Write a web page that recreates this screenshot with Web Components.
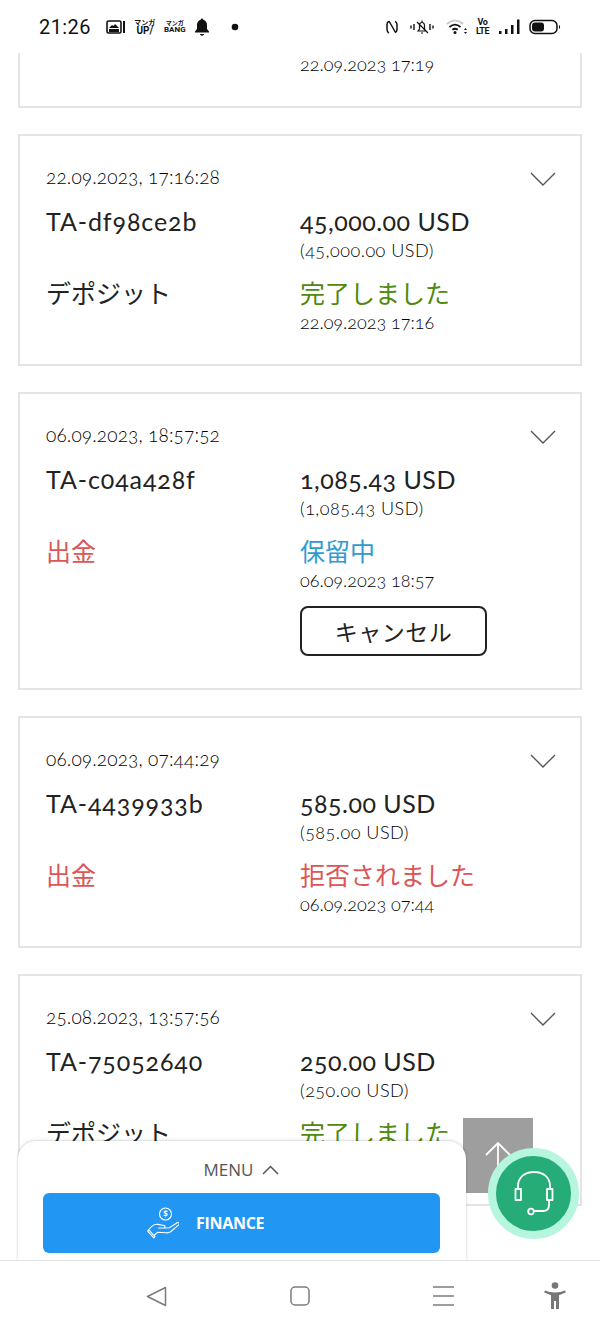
<!DOCTYPE html>
<html lang="ja">
<head>
<meta charset="utf-8">
<title>Transactions</title>
<style>
  html, body { margin: 0; padding: 0; background: #fff; }
  body { font-family: "Lato", "Noto Sans CJK JP", sans-serif; color: #222; font-variant-numeric: oldstyle-nums; }
  span { display: block; }
  .green { color: #4f8a10; }
  .blue { color: #2f9bd0; }
  .red { color: #dc5656; }
</style>
</head>
<body>
<template id="tx-card-tpl">
  <style>
    :host { display: block; margin: 0 18px 26px; border: 2px solid #e4e4e4; padding: 28px 28px 27px 26px; background: #fff; }
    .head { display: flex; justify-content: space-between; align-items: center; height: 24px; font-size: 19px; font-weight: 300; color: #000; letter-spacing: .15px; }
    svg { width: 26px; height: 14px; margin: 6px -4px 0 0; fill: none; stroke: #555; stroke-width: 1.4; }
    .grid { display: grid; grid-template-columns: 254px 1fr; margin-top: 18px; }
    .id { font-size: 25px; line-height: 30px; letter-spacing: .9px; color: #222; }
    .amount { font-size: 25px; line-height: 30px; letter-spacing: .5px; color: #222; }
    .sub { font-size: 18px; font-weight: 300; line-height: 28px; letter-spacing: .5px; color: #000; }
    .type, .status { font-size: 25px; line-height: 30px; margin-top: 14px; }
    .type { color: #222; }
    .when { font-size: 18px; font-weight: 300; line-height: 29px; color: #000; }
  </style>
  <div class="head"><slot name="date"></slot>
    <svg viewBox="0 0 26 14"><path d="M1 1l12 12L25 1"/></svg></div>
  <div class="grid">
    <div class="id"><slot name="id"></slot></div>
    <div><div class="amount"><slot name="amount"></slot></div><div class="sub"><slot name="sub"></slot></div></div>
    <div class="type"><slot name="type"></slot></div>
    <div><div class="status"><slot name="status"></slot></div><div class="when"><slot name="when"></slot></div><slot name="action"></slot></div>
  </div>
</template>

<template id="status-bar-tpl">
  <style>
    :host { display: flex; align-items: center; height: 53px; flex: none; padding: 0 38px 0 39px; box-sizing: border-box; background: #fff; color: #111; position: relative; z-index: 2; font-variant-numeric: normal; }
    .time { font: 20px "Roboto", sans-serif; letter-spacing: .4px; margin-right: 15px; }
    .left, .right { display: flex; align-items: center; }
    .right { margin-left: auto; }
    svg { display: block; flex: none; }
    .manga { font: 700 7px/8px "Noto Sans CJK JP", sans-serif; text-align: center; width: 22px; white-space: nowrap; }
    .manga b { display: block; font: 700 10px/9px "Roboto", sans-serif; }
    .small { font-size: 6px; line-height: 7px; }
    .small b { font-size: 8px; line-height: 8px; }
    .volte { font: 700 9px/9px "Roboto", sans-serif; text-align: center; width: 13px; letter-spacing: -.5px; }
  </style>
  <div class="left">
    <span class="time">21:26</span>
    <svg width="20" height="14" viewBox="0 0 20 14" style="margin-right:8px"><rect x="1" y="1" width="14" height="12" rx="1.5" fill="none" stroke="#111" stroke-width="1.6"/><path d="M3 8l3-3 1.500 1L9 4l4 4zM3 9h10v3H3z" fill="#111"/><path d="M17 1h2v12h-2z" fill="#111"/></svg>
    <div class="manga" style="margin-right:8px">マンガ<b>UP/</b></div>
    <div class="manga small" style="margin-right:9px">マンガ<b>BANG</b></div>
    <svg width="16" height="18" viewBox="0 0 16 18" style="margin-left:-1px"><path d="M8 0.500c.8 0 1.300.6 1.300 1.300 2.500.6 3.700 2.700 3.700 5.200v4l2 2.500v1H1v-1l2-2.500V7c0-2.500 1.200-4.600 3.700-5.200C6.700 1.100 7.200.5 8 .5zM6 16h4c0 1-.9 1.700-2 1.700S6 17 6 16z" fill="#111"/></svg>
    <svg width="8" height="8" viewBox="0 0 8 8" style="margin-left:21px"><circle cx="4" cy="4" r="3.300" fill="#111"/></svg>
  </div>
  <div class="right">
    <svg width="12" height="16" viewBox="0 0 12 16" style="margin-right:12px"><path d="M3 2.500C1.500 3 1 4 1 5.500v5c0 1.500.7 3 2 3.500M3 2l6.500 11.500M9 2.500c1.300.5 2 1.800 2 3v5c0 1.500-.5 2.500-2 3" fill="none" stroke="#111" stroke-width="1.500"/></svg>
    <svg width="24" height="16" viewBox="0 0 24 16" style="margin-right:12px"><path d="M8 12h8l-1.500-2V7c0-2-1-3.500-2.500-3.500S9.500 5 9.500 7v3zM7 3l11 11M11 14h2M12 1.500v2" fill="none" stroke="#111" stroke-width="1.200"/><path d="M1 6.500v3M4 5v6M20 5v6M23 6.500v3" stroke="#111" stroke-width="1.400"/></svg>
    <svg width="22" height="16" viewBox="0 0 22 16" style="margin-right:8px"><path d="M1 5c5-4.500 11-4.500 16 0" fill="none" stroke="#c8c8c8" stroke-width="1.800"/><path d="M3.500 8c3.500-3 7.500-3 11 0M6.300 10.800c2-1.600 3.400-1.600 5.400 0" fill="none" stroke="#111" stroke-width="1.800"/><circle cx="9" cy="13.500" r="1.500" fill="#111"/><path d="M19.500 9l-1.500 2h3zM19.500 15l-1.500-2h3z" fill="#111"/></svg>
    <div class="volte" style="margin-right:9px">Vo<br>LTE</div>
    <svg width="22" height="16" viewBox="0 0 22 16" style="margin-right:9px"><path d="M1 12h2.500v3H1zM7 10h2.500v5H7zM13 6h2.500v9H13zM19 .500h2.500V15H19z" fill="#111"/></svg>
    <svg width="33" height="16" viewBox="0 0 33 16"><rect x="1" y="1.500" width="27" height="13" rx="5" fill="none" stroke="#111" stroke-width="1.500"/><rect x="3" y="3.500" width="12" height="9" rx="3" fill="#111"/><path d="M30 6c1.500.5 1.500 3.500 0 4z" fill="#111"/></svg>
  </div>
</template>

<template id="bottom-menu-tpl">
  <style>
    :host { display: block; position: absolute; left: 18px; bottom: 73px; width: 448px; height: 119px; box-sizing: border-box; background: #fff; border-radius: 18px 18px 0 0; box-shadow: 0 -1px 3px rgba(0,0,0,.12), 1px 0 2px rgba(0,0,0,.05), -1px 0 2px rgba(0,0,0,.05); padding: 0 26px 0 25px; z-index: 3; font-variant-numeric: normal; }
    .title { display: flex; justify-content: center; align-items: center; gap: 9px; height: 52px; font: 17px/20px "Open Sans", sans-serif; color: #555; padding-top: 5px; box-sizing: border-box; }
    .title svg { width: 17px; height: 10px; fill: none; stroke: #555; stroke-width: 1.500; }
    .btn { display: flex; align-items: center; gap: 17px; height: 60px; padding-left: 104px; background: #2196f3; border-radius: 6px; color: #fff; font: 700 16px "Open Sans", sans-serif; letter-spacing: -.3px; }
    .coin { font: 700 8px "Open Sans", sans-serif; fill: #fff; stroke: none; }
  </style>
  <div class="title">MENU <svg viewBox="0 0 17 10"><path d="M1 9l7.500-7.500L16 9"/></svg></div>
  <div class="btn">
    <svg width="32" height="32" viewBox="0 0 32 32" fill="none" stroke="#fff" stroke-width="1.100" stroke-linejoin="round" stroke-linecap="round"><circle cx="18.500" cy="7" r="6"/><text class="coin" x="18.500" y="10" text-anchor="middle">$</text><path d="M1 23.500l3.500-3.800c2-2 4-2.800 6.500-2.300l6 1.100c1.400.3 1.400 2.600-.3 2.500h-5M17.500 21l5-.2 7.500-5c1.500-1 3 .6 1.600 2L24 24.500c-1.500 1.200-3 1.500-5 1.300l-8.500-.5-3 2.700"/><path d="M1 23.500l6.500 7-1.200 1.200-6-6.500z" transform="translate(.5 -.8)"/></svg>
    <span>FINANCE</span>
  </div>
</template>

<template id="scroll-top-tpl">
  <style>
    :host { display: flex; position: absolute; left: 463px; top: 1118px; width: 70px; height: 75px; background: #9e9e9e; align-items: flex-start; justify-content: center; z-index: 2; }
    svg { margin-top: 24px; fill: none; stroke: #fff; stroke-width: 1.800; }
  </style>
  <svg width="26" height="30" viewBox="0 0 26 30"><path d="M1 13L13 1l12 12M13 1v29"/></svg>
</template>

<template id="chat-fab-tpl">
  <style>
    :host { display: flex; position: absolute; left: 488px; top: 1148px; width: 75px; height: 75px; box-sizing: content-box; border-radius: 50%; background: #26ad77; border: 8px solid #b6f5de; align-items: center; justify-content: center; z-index: 4; }
    svg { fill: none; stroke: #fff; stroke-width: 1.800; }
  </style>
  <svg width="42" height="46" viewBox="0 0 42 46"><path d="M5 18V15C5 6 12 1 21 1s16 5 16 14v3"/><path d="M8 18H2.500v11H8zM34 18h5.500v11H34z" stroke-linejoin="round"/><path d="M36 29v5c0 4-2 6-6 6h-9"/><circle cx="18" cy="40.500" r="2.800"/></svg>
</template>

<template id="nav-bar-tpl">
  <style>
    :host { display: flex; position: relative; flex: none; height: 73px; box-sizing: border-box; border-top: 1px solid #e2e2e2; background: #fff; z-index: 5; }
    svg { position: absolute; fill: none; stroke: #7c7c7c; stroke-width: 1.500; }
  </style>
  <svg style="left:146px;top:25px" width="21" height="21" viewBox="0 0 21 21" stroke-linejoin="round"><path d="M19.500 1.500v18L1.500 10.500z"/></svg>
  <svg style="left:290px;top:25px" width="20" height="20" viewBox="0 0 20 20"><rect x="1" y="1" width="18" height="18" rx="4"/></svg>
  <svg style="left:433px;top:25px" width="21" height="20" viewBox="0 0 21 20"><path d="M0 1h21M0 10h21M0 19h21"/></svg>
  <svg style="left:544px;top:21px;stroke:none" width="22" height="28" viewBox="0 0 22 28"><circle cx="11" cy="3.500" r="3.300" fill="#777"/><path d="M1 8.500l-1 1.800 7 3V27h3v-8h2v8h3V13.300l7-3-1-1.800c-3 1.200-6 2-10 2s-7-.8-10-2z" fill="#777"/></svg>
</template>

<template id="tx-list-tpl">
  <style>
    :host { display: block; flex: 1; min-height: 0; overflow: hidden; }
    .clip { display: block; margin: 0 18px 26px; height: 55px; box-sizing: border-box; border: 2px solid #e4e4e4; border-top: 0; padding-left: 280px; font-size: 18px; font-weight: 300; line-height: 23px; color: #000; }
  </style>
  <div class="clip"><slot name="clipped"></slot></div>
  <slot></slot>
</template>

<app-shell>
  <status-bar></status-bar>
  <tx-list>
    <span slot="clipped">22.09.2023 17:19</span>
    <tx-card>
      <span slot="date">22.09.2023, 17:16:28</span><span slot="id">TA-df98ce2b</span>
      <span slot="amount">45,000.00 USD</span><span slot="sub">(45,000.00 USD)</span>
      <span slot="type">デポジット</span><span slot="status" class="green">完了しました</span>
      <span slot="when">22.09.2023 17:16</span>
    </tx-card>
    <tx-card>
      <span slot="date">06.09.2023, 18:57:52</span><span slot="id">TA-c04a428f</span>
      <span slot="amount">1,085.43 USD</span><span slot="sub">(1,085.43 USD)</span>
      <span slot="type" class="red">出金</span><span slot="status" class="blue">保留中</span>
      <span slot="when">06.09.2023 18:57</span>
      <cancel-button slot="action">キャンセル</cancel-button>
    </tx-card>
    <tx-card>
      <span slot="date">06.09.2023, 07:44:29</span><span slot="id">TA-4439933b</span>
      <span slot="amount">585.00 USD</span><span slot="sub">(585.00 USD)</span>
      <span slot="type" class="red">出金</span><span slot="status" class="red">拒否されました</span>
      <span slot="when">06.09.2023 07:44</span>
    </tx-card>
    <tx-card>
      <span slot="date">25.08.2023, 13:57:56</span><span slot="id">TA-75052640</span>
      <span slot="amount">250.00 USD</span><span slot="sub">(250.00 USD)</span>
      <span slot="type">デポジット</span><span slot="status" class="green">完了しました</span>
      <span slot="when">25.08.2023 13:57</span>
    </tx-card>
  </tx-list>
  <scroll-top></scroll-top>
  <chat-fab></chat-fab>
  <bottom-menu></bottom-menu>
  <nav-bar></nav-bar>
</app-shell>

<script>
// elements that only stamp their template
function fromTemplate(name) {
  customElements.define(name, class extends HTMLElement {
    constructor() {
      super();
      this.attachShadow({ mode: 'open' });
      this.shadowRoot.appendChild(document.getElementById(name + '-tpl').content.cloneNode(true));
    }
  });
}
['status-bar', 'tx-list', 'tx-card', 'bottom-menu', 'scroll-top', 'chat-fab', 'nav-bar'].forEach(fromTemplate);

class AppShell extends HTMLElement {
  constructor() {
    super();
    this.attachShadow({ mode: 'open' });
    this.shadowRoot.innerHTML = `
      <style>
        :host { display: flex; flex-direction: column; position: relative; width: 600px; height: 1333px; overflow: hidden; background: #fff; }
      </style>
      <slot></slot>
    `;
  }
}
customElements.define('app-shell', AppShell);

class CancelButton extends HTMLElement {
  constructor() {
    super();
    this.attachShadow({ mode: 'open' });
    this.shadowRoot.innerHTML = `
      <style>
        :host { display: flex; align-items: center; justify-content: center; width: 187px; height: 50px; box-sizing: border-box; margin-top: 11px; margin-bottom: 5px; border: 2px solid #222; border-radius: 8px; font-size: 23px; color: #222; letter-spacing: .5px; }
      </style>
      <slot></slot>
    `;
  }
}
customElements.define('cancel-button', CancelButton);
</script>
</body>
</html>
